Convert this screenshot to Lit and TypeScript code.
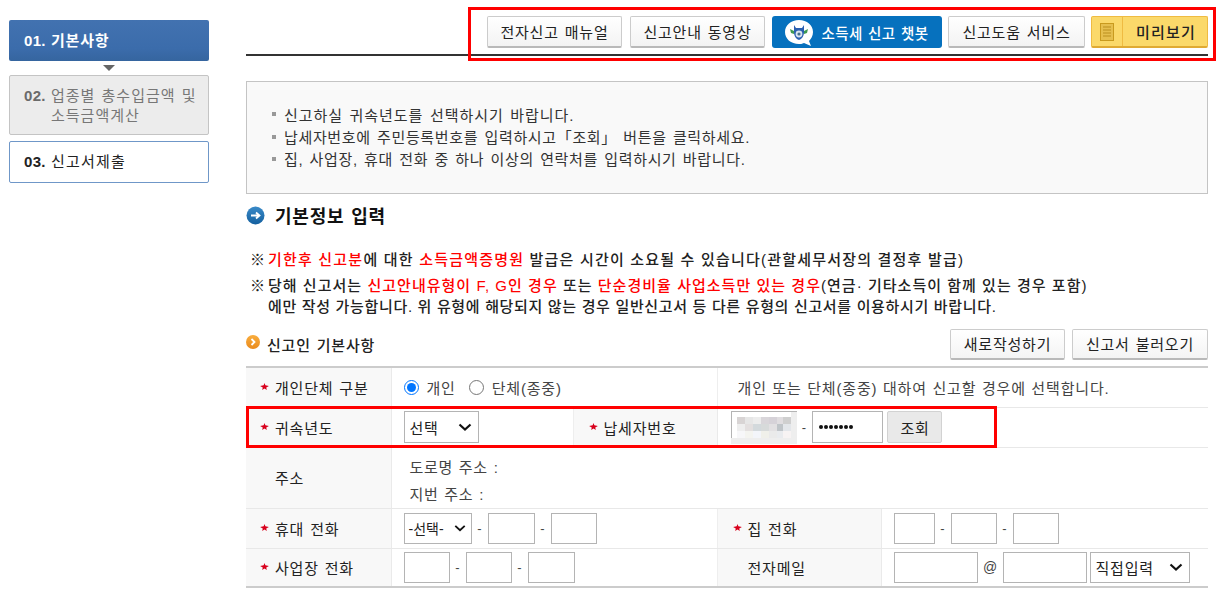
import { LitElement, html, css, svg } from "lit";
import { customElement } from "lit/decorators.js";

const star = svg`<svg class="star" width="9" height="7" viewBox="0 0 10 8"><path d="M5 0 L6 2.6 L10 3.400 L7 5 L7.600 8 L5 6.400 L2.400 8 L3 5 L0 3.400 L4 2.600 Z" fill="#d8001c"/></svg>`;

const mosaic: [number, number, number, number, string][] = [
  [6, 6, 8, 7, "#d8d4d4"], [14, 6, 8, 7, "#e6e6e6"], [22, 6, 8, 7, "#ececec"], [30, 6, 8, 7, "#d9d6da"], [38, 6, 8, 7, "#d6d2d8"], [46, 6, 6, 7, "#e0dde0"], [52, 6, 8, 7, "#cfcfcf"],
  [6, 13, 8, 7, "#eeeeee"], [14, 13, 8, 7, "#e3dfdf"], [22, 13, 8, 7, "#d3d9dc"], [30, 13, 8, 7, "#d7dada"], [38, 13, 8, 7, "#e2e0e2"], [46, 13, 6, 7, "#bfc4c8"], [52, 13, 8, 7, "#e3e6ea"],
  [6, 20, 8, 7, "#f7f7f9"], [14, 20, 8, 7, "#f4f4f0"], [22, 20, 8, 7, "#f3f5fa"], [30, 20, 8, 7, "#f0f0ea"], [38, 20, 8, 7, "#eaeaea"], [46, 20, 6, 7, "#e9ebee"], [52, 20, 8, 7, "#f7f3f3"],
  [0, 27, 64, 6, "#eeeeee"], [60, 1, 6, 32, "#eeeeee"],
];

@customElement("app-root")
export class AppRoot extends LitElement {
  static styles = css`
    :host {
      display: block;
      position: relative;
      width: 1221px;
      height: 589px;
      overflow: hidden;
      background: #fff;
      color: #222;
      font-family: "Liberation Sans", "Noto Sans CJK KR", sans-serif;
      font-size: 15px;
      letter-spacing: 0.8px;
      word-spacing: 1px;
    }
    * { box-sizing: border-box; }
    .page { display: flex; align-items: flex-start; padding: 0 13px 0 9px; gap: 37px; }
    .side { width: 200px; flex: none; padding-top: 20px; display: flex; flex-direction: column; }
    .step { display: flex; border-radius: 2px; padding: 0 15px; font-size: 15px; line-height: 20px; align-items: center; }
    .step b { width: 27px; flex: none; font-size: 15px; letter-spacing: 0.3px; }
    .step.one { height: 41px; background: linear-gradient(#4272b0, #3b6cab 70%, #35659f); color: #fff; font-weight: 700; }
    .arrow { width: 0; height: 0; align-self: center; margin: 4px 0 4px; border: 6px solid transparent; border-top: 6px solid #666; border-bottom: 0; }
    .step.two { height: 60px; background: #ececec; border: 1px solid #c4c4c4; padding: 10px 0 0 14px; color: #777; margin-bottom: 6px; align-items: flex-start; }
    .step.two b { color: #6a6a6a; }
    .step.two span { letter-spacing: 1px; }
    .step.three { height: 42px; border: 1px solid #6f97c8; padding: 0 14px; color: #222; }
    .step.three span { letter-spacing: 1.2px; }

    .main { width: 962px; flex: none; }
    .toolbar { height: 56px; border-bottom: 2px solid #333; padding-top: 16px; display: flex; justify-content: flex-end; }
    .tb { height: 32px; display: inline-flex; align-items: center; justify-content: center; font-size: 15px; border: 1px solid #ccc; border-bottom: 2px solid #b9b9b9; border-radius: 2px; background: linear-gradient(#fff, #f3f3f3); color: #222; white-space: nowrap; }
    .tb.manual { width: 135px; margin-right: 8px; }
    .tb.video { width: 135px; margin-right: 7px; }
    .tb.bot { width: 170px; background: #0671be; border: 0; border-radius: 3px; color: #fff; font-weight: 500; font-size: 14.5px; letter-spacing: 0.4px; gap: 6px; margin-right: 6px; padding-right: 2px; }
    .tb.help { width: 137px; margin-right: 6px; }
    .tb.preview { width: 117px; background: #fbd96a; border: 1px solid #efbb42; border-bottom: 2px solid #e0aa33; font-weight: 500; justify-content: flex-start; }
    .pv-ico { width: 31px; height: 100%; display: flex; align-items: center; justify-content: center; border-right: 1px solid #efbb42; }
    .pv-txt { flex: 1; text-align: center; letter-spacing: 1.2px; padding-left: 2px; }

    .info { margin-top: 25px; height: 113px; border: 1px solid #c4c4c4; background: #f9f9f9; padding: 21px 0 0 25px; }
    .info ul { list-style: none; margin: 0; padding: 0; }
    .info li { display: flex; align-items: center; height: 22.4px; font-size: 15px; letter-spacing: 0.65px; word-spacing: 1.5px; color: #333; }
    .info li.wide { letter-spacing: 0.95px; }
    .info li::before { content: ""; width: 4px; height: 4px; background: #999; margin-right: 8px; flex: none; }

    .h2 { display: flex; align-items: center; gap: 10px; margin-top: 11px; height: 20px; font-size: 18px; font-weight: 700; color: #111; letter-spacing: 0.8px; }
    .notes { margin-top: 24px; padding-left: 4px; font-size: 15px; font-weight: 500; color: #222; }
    .note { display: flex; line-height: 21px; }
    .note + .note { margin-top: 5px; }
    .note .m { width: 18px; flex: none; letter-spacing: 0; }
    .l1 { letter-spacing: 1.2px; word-spacing: 0; }
    .l2 { letter-spacing: 1.03px; word-spacing: 0; }
    .l3 { letter-spacing: 0.67px; word-spacing: 0; }
    .red { color: #f00; }

    .subrow { display: flex; align-items: center; margin-top: 12px; height: 30px; }
    .sub { display: flex; align-items: center; gap: 7px; font-size: 15px; font-weight: 500; color: #222; flex: 1; }
    .subbtn { height: 31px; display: inline-flex; align-items: center; justify-content: center; border: 1px solid #ccc; border-bottom: 2px solid #b9b9b9; border-radius: 2px; background: linear-gradient(#fff, #f4f4f4); font-size: 15px; margin-left: 7px; }
    .subbtn.a { width: 115px; }
    .subbtn.b { width: 136px; }

    .tablewrap { margin-top: 7px; }
    table { width: 962px; border-collapse: collapse; table-layout: fixed; border-top: 2px solid #ccc; border-bottom: 2px solid #ccc; }
    td, th { border-bottom: 1px solid #e8e8e8; padding: 0; font-weight: 400; font-size: 15px; text-align: left; vertical-align: middle; color: #333; }
    tr.r1, tr.r2, tr.r4 { height: 40px; }
    tr.r5 { height: 39px; }
    tr.r3 { height: 61px; }
    th { background: #f8f8f8; border-right: 1px solid #eaeaea; padding-left: 29px; position: relative; color: #222; }
    th.c { padding-left: 30px; }
    th .star { position: absolute; left: 14px; top: 50%; margin-top: -4px; }
    th.c .star { left: 15px; }
    td { padding-left: 12px; border-right: 1px solid #eee; }
    td:last-child { border-right: 0; }
    td.tax { padding-left: 13px; }
    .field { display: flex; align-items: center; }
    .inp { display: block; height: 31px; border: 1px solid #b4b4b4; background: #fff; flex: none; position: relative; }
    .sel { height: 32px; border: 1px solid #b4b4b4; background: #fff; font-size: 15px; color: #222; display: flex; align-items: center; justify-content: space-between; padding: 0 6px 0 5px; flex: none; }
    .sel.sm { width: 68px; height: 31px; padding: 0 5px 0 4px; }
    .sel.sm span { font-size: 14px; letter-spacing: 0; }
    .sel.mail { width: 100px; height: 31px; margin-left: 3px; }
    .sel svg { flex: none; }
    .dash { width: 16px; text-align: center; font-size: 13px; color: #444; flex: none; letter-spacing: 0; }
    .dash.n { width: 15px; }
    .radio { display: inline-flex; align-items: center; gap: 8px; margin-right: 13px; color: #444; font-size: 15px; }
    .rd { width: 15px; height: 15px; border-radius: 50%; border: 1px solid #767676; background: #fff; flex: none; }
    .rd.on { border: 1.5px solid #0075ff; display: flex; align-items: center; justify-content: center; }
    .rd.on::after { content: ""; width: 9px; height: 9px; border-radius: 50%; background: #0075ff; }
    .desc { color: #444; font-size: 15px; padding-left: 20px; letter-spacing: 0.85px; word-spacing: 0.5px; }
    .addr { padding: 6px 0 0 18px; line-height: 27px; font-size: 15px; color: #444; letter-spacing: 0.7px; }
    .lookup { width: 55px; height: 32px; margin-left: 4px; padding-left: 2px; display: flex; align-items: center; justify-content: center; background: #e9e9e9; border: 1px solid #d2d2d2; border-radius: 2px; font-size: 15px; color: #222; }
    .blur { width: 66px; height: 32px; }
    .mos { position: absolute; left: -1px; top: -1px; }
    .pw { display: flex; align-items: center; padding-left: 6px; gap: 1px; width: 71px; height: 32px; }
    .pw i { width: 4px; height: 4px; border-radius: 50%; background: #111; }
    .at { width: 25px; text-align: center; font-size: 14px; color: #444; flex: none; letter-spacing: 0; }

    .mark { position: absolute; border: 3px solid #f00; pointer-events: none; }
    .mark.top { left: 468px; top: 7px; width: 748px; height: 54px; }
    .mark.row { left: 246px; top: 406px; width: 751px; height: 42px; }
  `;

  private chevron(w = 14) {
    return svg`<svg width="${w}" height="8" viewBox="0 0 14 8"><path d="M1.5 1.5 L7 6.5 L12.5 1.5" fill="none" stroke="#111" stroke-width="2.2"/></svg>`;
  }

  private inp(w: number) {
    return html`<span class="inp" style="width:${w}px"></span>`;
  }

  private phone(w: number[]) {
    return html`<div class="field">
      ${this.inp(w[0])}<span class="dash">-</span>${this.inp(w[1])}<span class="dash">-</span>${this.inp(w[2])}
    </div>`;
  }

  render() {
    return html`
      <div class="page">
        <aside class="side">
          <div class="step one"><b>01.</b><span>기본사항</span></div>
          <div class="arrow"></div>
          <div class="step two"><b>02.</b><span>업종별 총수입금액 및<br />소득금액계산</span></div>
          <div class="step three"><b>03.</b><span>신고서제출</span></div>
        </aside>
        <main class="main">
          <div class="toolbar">
            <span class="tb manual">전자신고 매뉴얼</span>
            <span class="tb video">신고안내 동영상</span>
            <span class="tb bot">
              <svg width="32" height="30" viewBox="0 0 32 30">
                <path d="M16 3 C24 3 30 8 30 15 C30 19 28 22 26 24 L28 29 L21 26 C19 27 17.500 27 16 27 C8 27 2 22 2 15 C2 8 8 3 16 3 Z" fill="#fff"/>
                <path d="M11 8 L13 11 H19 L21 8 L21 15 C21 19 19 22 16 23 C13 22 11 19 11 15 Z" fill="#2a5fb0"/>
                <circle cx="16" cy="17" r="3.4" fill="#d9e4ef"/>
                <circle cx="16" cy="17" r="1.6" fill="#46708a"/>
                <path d="M7 12 L11 14 L11 17 L8 16 Z" fill="#3f9a52"/>
                <path d="M25 12 L21 14 L21 17 L24 16 Z" fill="#3f9a52"/>
              </svg>
              <span>소득세 신고 챗봇</span>
            </span>
            <span class="tb help">신고도움 서비스</span>
            <span class="tb preview">
              <span class="pv-ico">
                <svg width="14" height="18" viewBox="0 0 14 18">
                  <rect x="0.500" y="0.500" width="13" height="17" fill="#e6bf4e" stroke="#c99a1e"/>
                  <path d="M3 4 H11 M3 7 H11 M3 10 H11 M3 13 H11" stroke="#b98f1e" stroke-width="1.200"/>
                </svg>
              </span>
              <span class="pv-txt">미리보기</span>
            </span>
          </div>

          <div class="info">
            <ul>
              <li class="wide">신고하실 귀속년도를 선택하시기 바랍니다.</li>
              <li>납세자번호에 주민등록번호를 입력하시고「조회」 버튼을 클릭하세요.</li>
              <li>집, 사업장, 휴대 전화 중 하나 이상의 연락처를 입력하시기 바랍니다.</li>
            </ul>
          </div>

          <div class="h2">
            <svg width="19" height="19" viewBox="0 0 19 19">
              <defs><linearGradient id="bl" x1="0" y1="0" x2="0" y2="1"><stop offset="0" stop-color="#3a8ac8"/><stop offset="1" stop-color="#14609f"/></linearGradient></defs>
              <circle cx="9.500" cy="9.500" r="9" fill="url(#bl)"/>
              <path d="M5 9.500 H13 M10 6.500 L13.500 9.500 L10 12.500" fill="none" stroke="#fff" stroke-width="1.800"/>
            </svg>
            <span>기본정보 입력</span>
          </div>

          <div class="notes">
            <div class="note"><span class="m">※</span><span class="l1"><span class="red">기한후 신고분</span>에 대한 <span class="red">소득금액증명원</span> 발급은 시간이 소요될 수 있습니다(관할세무서장의 결정후 발급)</span></div>
            <div class="note"><span class="m">※</span><span><span class="l2">당해 신고서는 <span class="red">신고안내유형이 F, G인 경우</span> 또는 <span class="red">단순경비율 사업소득만 있는 경우</span>(연금· 기타소득이 함께 있는 경우 포함)</span><br /><span class="l3">에만 작성 가능합니다. 위 유형에 해당되지 않는 경우 일반신고서 등 다른 유형의 신고서를 이용하시기 바랍니다.</span></span></div>
          </div>

          <div class="subrow">
            <div class="sub">
              <svg width="14" height="14" viewBox="0 0 14 14" style="margin-top:-4px">
                <defs><linearGradient id="or" x1="0" y1="0" x2="0" y2="1"><stop offset="0" stop-color="#f9ad3e"/><stop offset="1" stop-color="#ea8a1c"/></linearGradient></defs>
                <circle cx="7" cy="7" r="7" fill="url(#or)"/>
                <path d="M5.500 4 L8.500 7 L5.500 10" fill="none" stroke="#fff" stroke-width="1.800"/>
              </svg>
              <span>신고인 기본사항</span>
            </div>
            <span class="subbtn a">새로작성하기</span>
            <span class="subbtn b">신고서 불러오기</span>
          </div>

          <div class="tablewrap">
            <table>
              <colgroup>
                <col style="width:145px" /><col style="width:182px" /><col style="width:144px" /><col style="width:164px" /><col style="width:327px" />
              </colgroup>
              <tr class="r1">
                <th>${star}개인단체 구분</th>
                <td colspan="2">
                  <div class="field">
                    <span class="radio"><span class="rd on"></span>개인</span>
                    <span class="radio"><span class="rd"></span>단체(종중)</span>
                  </div>
                </td>
                <td colspan="2" class="desc">개인 또는 단체(종중) 대하여 신고할 경우에 선택합니다.</td>
              </tr>
              <tr class="r2">
                <th>${star}귀속년도</th>
                <td><div class="field"><span class="sel" style="width:75px"><span>선택</span>${this.chevron()}</span></div></td>
                <th class="c">${star}납세자번호</th>
                <td colspan="2" class="tax">
                  <div class="field">
                    <span class="inp blur">
                      <svg class="mos" width="66" height="33" viewBox="0 0 66 33">
                        ${mosaic.map(([x, y, w, h, c]) => svg`<rect x="${x}" y="${y}" width="${w}" height="${h}" fill="${c}"/>`)}
                      </svg>
                    </span>
                    <span class="dash n">-</span>
                    <span class="inp pw"><i></i><i></i><i></i><i></i><i></i><i></i><i></i></span>
                    <span class="lookup">조회</span>
                  </div>
                </td>
              </tr>
              <tr class="r3">
                <th>주소</th>
                <td colspan="4" class="addr">도로명 주소 :<br />지번 주소 :</td>
              </tr>
              <tr class="r4">
                <th>${star}휴대 전화</th>
                <td colspan="2">
                  <div class="field">
                    <span class="sel sm"><span>-선택-</span>${this.chevron(12)}</span>
                    <span class="dash">-</span>
                    ${this.inp(47)}<span class="dash">-</span>${this.inp(46)}
                  </div>
                </td>
                <th class="c">${star}집 전화</th>
                <td>${this.phone([41, 46, 46])}</td>
              </tr>
              <tr class="r5">
                <th>${star}사업장 전화</th>
                <td colspan="2">${this.phone([46, 46, 47])}</td>
                <th class="c">전자메일</th>
                <td>
                  <div class="field">
                    ${this.inp(84)}<span class="at">@</span>${this.inp(84)}
                    <span class="sel mail"><span>직접입력</span>${this.chevron()}</span>
                  </div>
                </td>
              </tr>
            </table>
          </div>
        </main>
      </div>
      <div class="mark top"></div>
      <div class="mark row"></div>
    `;
  }
}
